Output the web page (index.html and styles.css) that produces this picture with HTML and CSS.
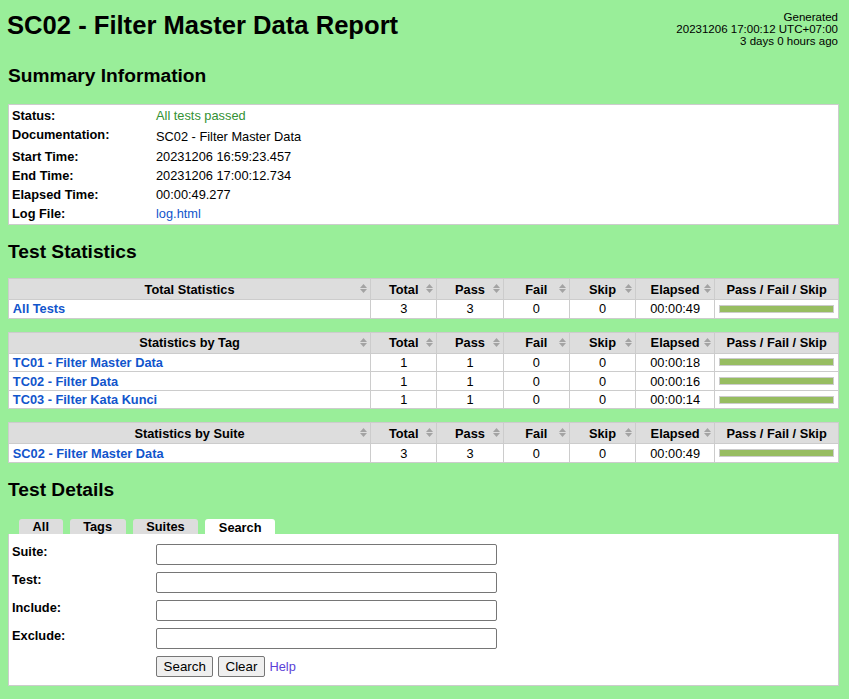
FILE: index.html
```html
<!DOCTYPE html>
<html lang="en">
<head>
<meta charset="utf-8">
<title>SC02 - Filter Master Data Report</title>
<link rel="stylesheet" href="styles.css">
</head>
<body class="all-passed">
<div class="header">
  <h1>SC02 - Filter Master Data Report</h1>
  <div class="generated">Generated<br>20231206 17:00:12 UTC+07:00<br>3 days 0 hours ago</div>
</div>

<h2>Summary Information</h2>
<table class="details">
  <tr><th>Status:</th><td class="pass">All tests passed</td></tr>
  <tr><th>Documentation:</th><td class="doc">SC02 - Filter Master Data</td></tr>
  <tr><th>Start Time:</th><td>20231206 16:59:23.457</td></tr>
  <tr><th>End Time:</th><td>20231206 17:00:12.734</td></tr>
  <tr><th>Elapsed Time:</th><td>00:00:49.277</td></tr>
  <tr><th>Log File:</th><td><a href="#">log.html</a></td></tr>
</table>

<h2 class="stats-heading">Test Statistics</h2>
<table class="statistics">
  <thead>
    <tr>
      <th class="col-name">Total Statistics<svg class="sort" width="7" height="9" viewBox="0 0 7 9"><path d="M0 4 L3.5 0 L7 4 Z M0 5 L3.5 9 L7 5 Z"/></svg></th>
      <th class="col-stat">Total<svg class="sort" width="7" height="9" viewBox="0 0 7 9"><path d="M0 4 L3.5 0 L7 4 Z M0 5 L3.5 9 L7 5 Z"/></svg></th>
      <th class="col-stat">Pass<svg class="sort" width="7" height="9" viewBox="0 0 7 9"><path d="M0 4 L3.5 0 L7 4 Z M0 5 L3.5 9 L7 5 Z"/></svg></th>
      <th class="col-stat">Fail<svg class="sort" width="7" height="9" viewBox="0 0 7 9"><path d="M0 4 L3.5 0 L7 4 Z M0 5 L3.5 9 L7 5 Z"/></svg></th>
      <th class="col-stat">Skip<svg class="sort" width="7" height="9" viewBox="0 0 7 9"><path d="M0 4 L3.5 0 L7 4 Z M0 5 L3.5 9 L7 5 Z"/></svg></th>
      <th class="col-elapsed">Elapsed<svg class="sort" width="7" height="9" viewBox="0 0 7 9"><path d="M0 4 L3.5 0 L7 4 Z M0 5 L3.5 9 L7 5 Z"/></svg></th>
      <th class="col-graph">Pass / Fail / Skip</th>
    </tr>
  </thead>
  <tbody>
    <tr>
      <td class="stat-name"><a href="#">All Tests</a></td>
      <td class="num">3</td><td class="num">3</td><td class="num">0</td><td class="num">0</td>
      <td class="num">00:00:49</td>
      <td><div class="graph"><div class="pass-bar" style="width:100%"></div></div></td>
    </tr>
  </tbody>
</table>

<table class="statistics">
  <thead>
    <tr>
      <th class="col-name">Statistics by Tag<svg class="sort" width="7" height="9" viewBox="0 0 7 9"><path d="M0 4 L3.5 0 L7 4 Z M0 5 L3.5 9 L7 5 Z"/></svg></th>
      <th class="col-stat">Total<svg class="sort" width="7" height="9" viewBox="0 0 7 9"><path d="M0 4 L3.5 0 L7 4 Z M0 5 L3.5 9 L7 5 Z"/></svg></th>
      <th class="col-stat">Pass<svg class="sort" width="7" height="9" viewBox="0 0 7 9"><path d="M0 4 L3.5 0 L7 4 Z M0 5 L3.5 9 L7 5 Z"/></svg></th>
      <th class="col-stat">Fail<svg class="sort" width="7" height="9" viewBox="0 0 7 9"><path d="M0 4 L3.5 0 L7 4 Z M0 5 L3.5 9 L7 5 Z"/></svg></th>
      <th class="col-stat">Skip<svg class="sort" width="7" height="9" viewBox="0 0 7 9"><path d="M0 4 L3.5 0 L7 4 Z M0 5 L3.5 9 L7 5 Z"/></svg></th>
      <th class="col-elapsed">Elapsed<svg class="sort" width="7" height="9" viewBox="0 0 7 9"><path d="M0 4 L3.5 0 L7 4 Z M0 5 L3.5 9 L7 5 Z"/></svg></th>
      <th class="col-graph">Pass / Fail / Skip</th>
    </tr>
  </thead>
  <tbody>
    <tr>
      <td class="stat-name"><a href="#">TC01 - Filter Master Data</a></td>
      <td class="num">1</td><td class="num">1</td><td class="num">0</td><td class="num">0</td>
      <td class="num">00:00:18</td>
      <td><div class="graph"><div class="pass-bar" style="width:100%"></div></div></td>
    </tr>
    <tr>
      <td class="stat-name"><a href="#">TC02 - Filter Data</a></td>
      <td class="num">1</td><td class="num">1</td><td class="num">0</td><td class="num">0</td>
      <td class="num">00:00:16</td>
      <td><div class="graph"><div class="pass-bar" style="width:100%"></div></div></td>
    </tr>
    <tr>
      <td class="stat-name"><a href="#">TC03 - Filter Kata Kunci</a></td>
      <td class="num">1</td><td class="num">1</td><td class="num">0</td><td class="num">0</td>
      <td class="num">00:00:14</td>
      <td><div class="graph"><div class="pass-bar" style="width:100%"></div></div></td>
    </tr>
  </tbody>
</table>

<table class="statistics">
  <thead>
    <tr>
      <th class="col-name">Statistics by Suite<svg class="sort" width="7" height="9" viewBox="0 0 7 9"><path d="M0 4 L3.5 0 L7 4 Z M0 5 L3.5 9 L7 5 Z"/></svg></th>
      <th class="col-stat">Total<svg class="sort" width="7" height="9" viewBox="0 0 7 9"><path d="M0 4 L3.5 0 L7 4 Z M0 5 L3.5 9 L7 5 Z"/></svg></th>
      <th class="col-stat">Pass<svg class="sort" width="7" height="9" viewBox="0 0 7 9"><path d="M0 4 L3.5 0 L7 4 Z M0 5 L3.5 9 L7 5 Z"/></svg></th>
      <th class="col-stat">Fail<svg class="sort" width="7" height="9" viewBox="0 0 7 9"><path d="M0 4 L3.5 0 L7 4 Z M0 5 L3.5 9 L7 5 Z"/></svg></th>
      <th class="col-stat">Skip<svg class="sort" width="7" height="9" viewBox="0 0 7 9"><path d="M0 4 L3.5 0 L7 4 Z M0 5 L3.5 9 L7 5 Z"/></svg></th>
      <th class="col-elapsed">Elapsed<svg class="sort" width="7" height="9" viewBox="0 0 7 9"><path d="M0 4 L3.5 0 L7 4 Z M0 5 L3.5 9 L7 5 Z"/></svg></th>
      <th class="col-graph">Pass / Fail / Skip</th>
    </tr>
  </thead>
  <tbody>
    <tr>
      <td class="stat-name"><a href="#">SC02 - Filter Master Data</a></td>
      <td class="num">3</td><td class="num">3</td><td class="num">0</td><td class="num">0</td>
      <td class="num">00:00:49</td>
      <td><div class="graph"><div class="pass-bar" style="width:100%"></div></div></td>
    </tr>
  </tbody>
</table>

<h2>Test Details</h2>
<ul class="tabs">
  <li class="tab">All</li>
  <li class="tab">Tags</li>
  <li class="tab">Suites</li>
  <li class="tab tab-selected">Search</li>
</ul>
<div class="tab-panel">
  <form class="search-form">
    <label class="search-label" for="s-suite">Suite:</label>
    <input class="search-input" id="s-suite" type="text">
    <label class="search-label" for="s-test">Test:</label>
    <input class="search-input" id="s-test" type="text">
    <label class="search-label" for="s-include">Include:</label>
    <input class="search-input" id="s-include" type="text">
    <label class="search-label" for="s-exclude">Exclude:</label>
    <input class="search-input" id="s-exclude" type="text">
    <div class="search-buttons">
      <button type="button" class="btn">Search</button>
      <button type="button" class="btn">Clear</button>
      <a class="help" href="#">Help</a>
    </div>
  </form>
</div>
</body>
</html>
```

FILE: styles.css
```css
html, body {
  margin: 0;
  padding: 0;
}

body {
  background: #99ee99;
  color: #000;
  font-family: "Liberation Sans", Arial, Helvetica, sans-serif;
  font-size: 12.8px;
  padding-left: 8px;
  width: 831px;
}

a {
  color: #1155cc;
  text-decoration: none;
}

.header {
  display: flex;
  justify-content: space-between;
  align-items: flex-start;
  height: 38px;
  margin-top: 11px;
}

h1 {
  margin: 0 0 0 -1px;
  font-size: 25.6px;
  font-weight: bold;
}

.generated {
  text-align: right;
  font-size: 11.52px;
  white-space: nowrap;
  margin: 0 1px 0 0;
}

h2 {
  font-size: 19.2px;
  font-weight: bold;
  margin: 16px 0 17px;
}

h2.stats-heading {
  margin-bottom: 15px;
}

/* Summary */
.details {
  width: 831px;
  background: #fff;
  border: 1px solid #ccc;
  border-spacing: 2px;
  box-sizing: border-box;
}

.details th,
.details td {
  padding: 1px;
  text-align: left;
  vertical-align: top;
}

.details th {
  width: 140px;
  font-weight: bold;
}

.details td.doc {
  padding: 3px 1px 2px;
}

.pass {
  color: #339133;
}

/* Statistics */
.statistics {
  width: 831px;
  border-collapse: collapse;
  background: #fff;
  margin: 0 0 13px;
}

.statistics th,
.statistics td {
  border: 1px solid #ccc;
  padding: 1.28px 3.84px;
}

.statistics th {
  position: relative;
  background: #ddd;
  padding: 2.56px 3.84px;
  font-weight: bold;
  text-align: center;
}

.col-stat {
  width: 57.6px;
}

.col-elapsed {
  width: 70.4px;
}

.col-graph {
  width: 115.2px;
}

.sort {
  position: absolute;
  right: 3px;
  top: 50%;
  margin-top: -5px;
  fill: #a3a3a3;
}

.stat-name {
  text-align: left;
  font-weight: bold;
}

.num {
  text-align: center;
}

.graph {
  border: 1px solid #ccc;
  height: 6px;
  background: #fff;
}

.pass-bar {
  height: 100%;
  background: #97bd61;
}

/* Tabs */
.tabs {
  display: flex;
  gap: 7px;
  list-style: none;
  margin: 18px 0 0;
  padding: 0 0 0 11px;
}

.tab {
  background: #ddd;
  border-radius: 3px 3px 0 0;
  padding: 0 13.6px;
  height: 15px;
  line-height: 15px;
  font-weight: bold;
}

.tab-selected {
  background: #fff;
  padding-top: 1px;
  height: 14px;
  line-height: 15px;
}

.tab-panel {
  width: 831px;
  box-sizing: border-box;
  background: #fff;
  border: 1px solid #ccc;
  border-top: 0;
  padding: 10px 3px 8px;
}

.search-form {
  display: grid;
  grid-template-columns: 144px 341px;
  grid-auto-rows: 21px;
  row-gap: 7px;
  margin: 0;
}

.search-label {
  font-weight: bold;
  line-height: 15px;
}

.search-input {
  box-sizing: border-box;
  width: 341px;
  height: 21px;
  margin: 0;
  border: 1px solid #767676;
  border-radius: 2px;
  background: #fff;
  font-family: "Liberation Sans", Arial, sans-serif;
  font-size: 13.33px;
  padding: 1px 2px;
}

.search-buttons {
  grid-column: 2;
  display: flex;
  align-items: center;
  gap: 4.5px;
}

.btn {
  box-sizing: border-box;
  height: 21px;
  margin: 0;
  padding: 1px 6.6px;
  border: 1px solid #767676;
  border-radius: 2px;
  background: #efefef;
  color: #000;
  font-family: "Liberation Sans", Arial, sans-serif;
  font-size: 13.33px;
}

.help {
  color: #5a3fd8;
  font-size: 12.8px;
}
```
